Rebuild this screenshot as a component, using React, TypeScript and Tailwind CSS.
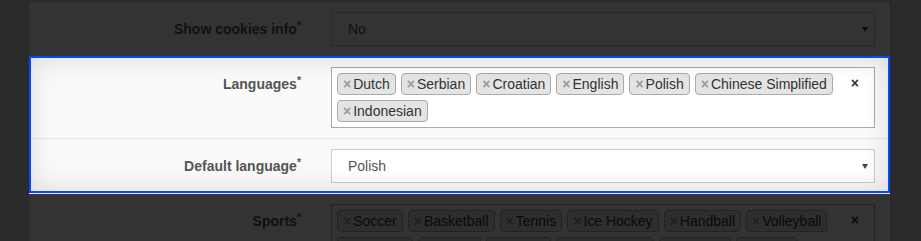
import React from "react";

const Tag = ({ label }: { label: string }) => (
  <li className="mr-[5px] mt-[5px] flex h-[22px] items-center rounded-[4px] border border-[#aaa] bg-[#e4e4e4] px-[5px] leading-5 text-[#333]">
    <span className="mr-[2px] font-bold text-[#999]">×</span>
    {label}
  </li>
);

const Label = ({ text, center }: { text: string; center?: boolean }) => (
  <label
    className={
      center
        ? "w-1/3 shrink-0 self-center pr-[15px] text-right font-bold leading-5 text-[#555]"
        : "w-1/3 shrink-0 pr-[15px] pt-[7px] text-right font-bold leading-5 text-[#555]"
    }
  >
    {text}
    <sup>*</sup>
  </label>
);

const SingleSelect = ({ value }: { value: string }) => (
  <div className="flex h-[34px] items-center justify-between border border-[#ccc] bg-white pl-[16px] pr-[6px] text-[#555]">
    <span className="leading-5">{value}</span>
    <span className="h-0 w-0 border-l-[3px] border-r-[3px] border-t-[5px] border-l-transparent border-r-transparent border-t-[#444]" />
  </div>
);

const MultiSelect = ({ items }: { items: string[] }) => (
  <div className="flex border border-[#aaa] bg-white pb-[5px] pl-[5px] pr-[15px]">
    <ul className="flex flex-1 flex-wrap">
      {items.map((t) => (
        <Tag key={t} label={t} />
      ))}
    </ul>
    <span className="mt-[5px] font-bold leading-5 text-[#333]">×</span>
  </div>
);

const Row = ({ children }: { children: React.ReactNode }) => (
  <div className="flex border-b border-[#e8e8e8] py-[10px]">{children}</div>
);

export default function App() {
  return (
    <div className="relative h-[241px] w-[921px] overflow-hidden bg-[#d8d8d8] font-['Liberation_Sans',Arial,sans-serif] text-[14px]">
      <div className="ml-[29px] mt-px w-[862px] border-r border-t border-[#c8c8c8] bg-white">
        <Row>
          <Label text="Show cookies info" center />
          <div className="flex-1 px-[15px]">
            <SingleSelect value="No" />
          </div>
        </Row>

        <div className="relative z-20 bg-[#fafafa]">
          <Row>
            <Label text="Languages" />
            <div className="flex-1 px-[15px]">
              <MultiSelect
                items={["Dutch", "Serbian", "Croatian", "English", "Polish", "Chinese Simplified", "Indonesian"]}
              />
            </div>
          </Row>
          <Row>
            <Label text="Default language" center />
            <div className="flex-1 px-[15px]">
              <SingleSelect value="Polish" />
            </div>
          </Row>
          <div className="pointer-events-none absolute bottom-px left-0 right-0 top-[-1px] border-2 border-[#0546ff] shadow-[inset_0_0_28px_rgba(0,0,0,0.13)]" />
        </div>

        <Row>
          <Label text="Sports" />
          <div className="flex-1 px-[15px]">
            <MultiSelect
              items={[
                "Soccer",
                "Basketball",
                "Tennis",
                "Ice Hockey",
                "Handball",
                "Volleyball",
                "Baseball",
                "Rugby",
                "Boxing",
                "Ski Jumping",
                "Fencing",
                "Chess",
                "Golf",
                "Cycling",
              ]}
            />
          </div>
        </Row>
      </div>
      <div className="absolute inset-0 z-10 bg-black/80" />
    </div>
  );
}
